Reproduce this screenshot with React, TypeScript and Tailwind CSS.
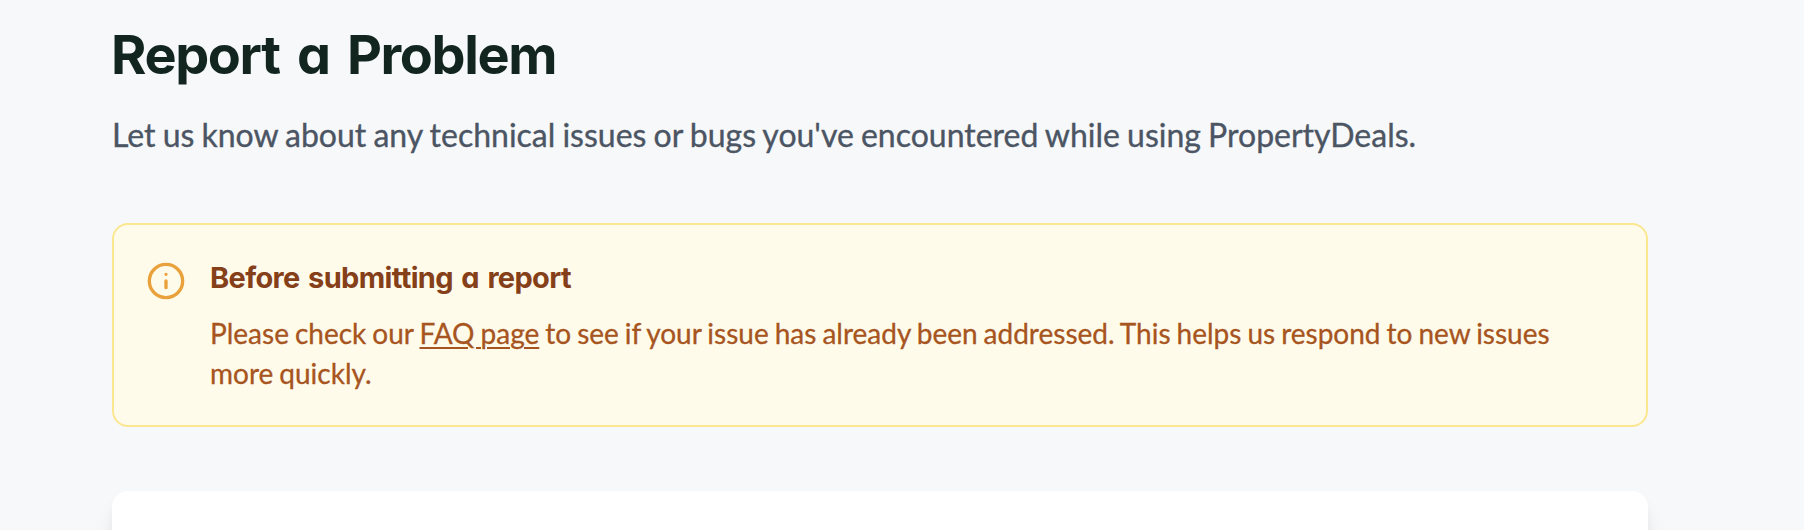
export default function App() {
  return (
    <main className="h-[530px] overflow-hidden bg-[#f7f8fa] pl-[112px] pt-[19px] font-['Lato',sans-serif]">
      <div className="w-[1536px]">
        <h1 className="-ml-[1px] font-['Inter',sans-serif] text-[54px] leading-[72px] font-bold tracking-[-1.4px] whitespace-nowrap text-[#12261f] [font-feature-settings:'cv11'] [word-spacing:6px]">
          Report a Problem
        </h1>
        <p className="mt-[16px] text-[32px] leading-[56px] whitespace-nowrap text-[#4b5563] [-webkit-text-stroke:0.35px_#4b5563] [word-spacing:-1.08px]">
          Let us know about any technical issues or bugs you've encountered while using PropertyDeals.
        </p>
        <section className="mt-[60px] flex h-[204px] rounded-2xl border-2 border-[#fbe790] bg-[#fffbeb] px-[32px] pt-[32px]">
          <svg className="mt-[4px] size-[40px] shrink-0" viewBox="0 0 24 24" fill="none" stroke="#e9a23b" strokeWidth="2" strokeLinecap="round" strokeLinejoin="round">
            <circle cx="12" cy="12" r="10" />
            <path d="M12 16v-4M12 8h.01" />
          </svg>
          <div className="ml-[24px]">
            <h2 className="pt-[1px] font-['Inter',sans-serif] text-[29px] leading-[40px] font-bold tracking-[-0.65px] whitespace-nowrap text-[#85401a] [font-feature-settings:'cv11'] [word-spacing:2.2px]">
              Before submitting a report
            </h2>
            <p className="mt-[15px] text-[28px] leading-[40px] text-[#a75520] [-webkit-text-stroke:0.3px_#a75520] [word-spacing:-1.15px]">
              Please check our <a className="underline decoration-2 underline-offset-[3px]" href="#faq">FAQ page</a> to see if your issue has already been addressed. This helps us respond to new issues more quickly.
            </p>
          </div>
        </section>
        <section className="mt-[64px] h-[80px] rounded-2xl bg-white shadow-[0_20px_30px_-6px_rgba(0,0,0,0.1),0_8px_12px_-4px_rgba(0,0,0,0.1)]" />
      </div>
    </main>
  );
}
